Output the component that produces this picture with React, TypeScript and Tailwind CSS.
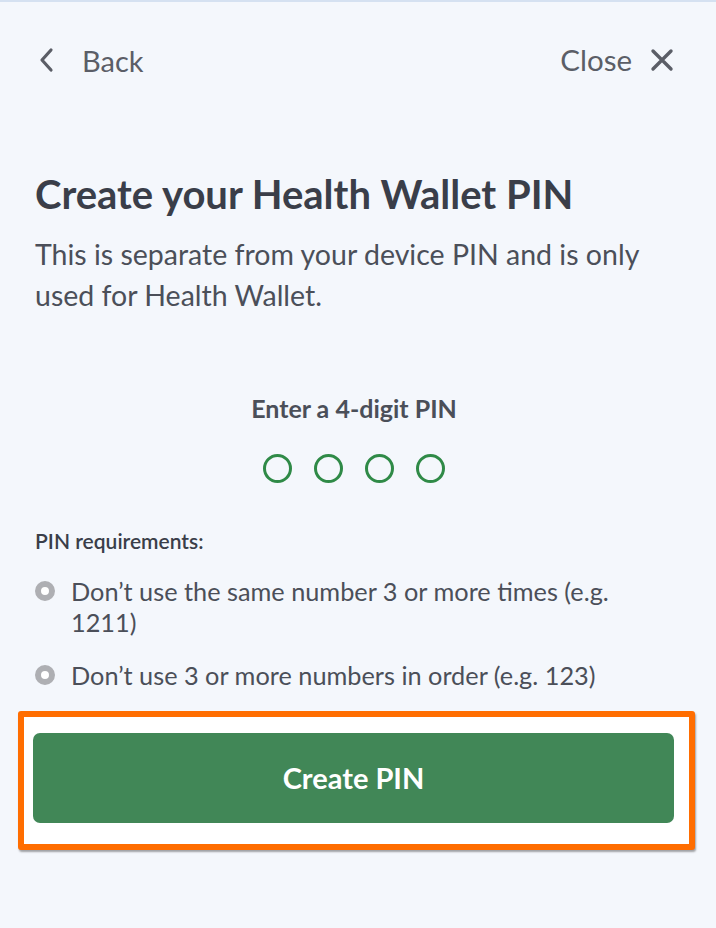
import React from "react";

export default function App() {
  return (
    <div className="w-[716px] h-[928px] bg-[#f4f7fc] border-t-2 border-[#d5e1f1] flex flex-col" style={{ fontFamily: "Lato, 'Noto Sans', sans-serif" }}>
      <div className="flex items-center justify-between pl-[38px] pr-[42px] pt-[41px] h-[75px]">
        <div className="flex items-center gap-[28px] text-[#5b5e67]">
          <svg width="16" height="26" viewBox="0 0 16 26" fill="none">
            <path d="M13 3L4 13l9 10" stroke="#5b5e67" strokeWidth="3.2" strokeLinecap="round" strokeLinejoin="round" />
          </svg>
          <span className="text-[29px] leading-none">Back</span>
        </div>
        <div className="flex items-center gap-[18px] text-[#5b5e67]">
          <span className="text-[29.5px] leading-none">Close</span>
          <svg width="24" height="24" viewBox="0 0 24 24" fill="none">
            <path d="M3 3l18 18M21 3L3 21" stroke="#5b5e67" strokeWidth="3.4" strokeLinecap="round" />
          </svg>
        </div>
      </div>

      <div className="px-[35px] mt-[93px]">
        <h1 className="text-[40px] font-bold text-[#3a3e49] leading-[48px]">Create your Health Wallet PIN</h1>
        <p className="mt-[16px] text-[28.5px] leading-[41px] text-[#4b4f59]">
          This is separate from your device PIN and is only used for Health Wallet.
        </p>
      </div>

      <div className="flex flex-col items-center mt-[78px] pr-[8px]">
        <div className="text-[25px] font-bold text-[#4b4f59] leading-[28px]">Enter a 4-digit PIN</div>
        <div className="flex gap-[22px] mt-[32px]">
          {[0, 1, 2, 3].map((i) => (
            <div key={i} className="w-[29px] h-[29px] rounded-full border-[3px] border-[#2f8a47]" />
          ))}
        </div>
      </div>

      <div className="px-[35px] mt-[46px]">
        <div className="text-[21px] font-semibold text-[#3a3e49] leading-[24px]">PIN requirements:</div>
        <ul className="mt-[23px] flex flex-col gap-[22px]">
          <li className="flex items-start gap-[16px]">
            <span className="mt-[5px] shrink-0 w-[20px] h-[20px] rounded-full border-[6px] border-[#aeafb3] bg-white" />
            <span className="text-[25.3px] leading-[31px] text-[#4b4f59] pr-[40px]">Don’t use the same number 3 or more times (e.g. 1211)</span>
          </li>
          <li className="flex items-start gap-[16px]">
            <span className="mt-[5px] shrink-0 w-[20px] h-[20px] rounded-full border-[6px] border-[#aeafb3] bg-white" />
            <span className="text-[25.3px] leading-[31px] text-[#4b4f59]">Don’t use 3 or more numbers in order (e.g. 123)</span>
          </li>
        </ul>
      </div>

      <div className="mx-[18px] mt-[20px] w-[677px] border-[6px] border-[#ff6d00] rounded-[3px] bg-white shadow-[1px_2px_2px_rgba(0,0,0,0.35)] pl-[9px] pr-[15px] pt-[16px] pb-[21px]">
        <button className="w-full h-[90px] rounded-[7px] bg-[#418757] text-white text-[29px] font-bold flex items-center justify-center">
          Create PIN
        </button>
      </div>
    </div>
  );
}
